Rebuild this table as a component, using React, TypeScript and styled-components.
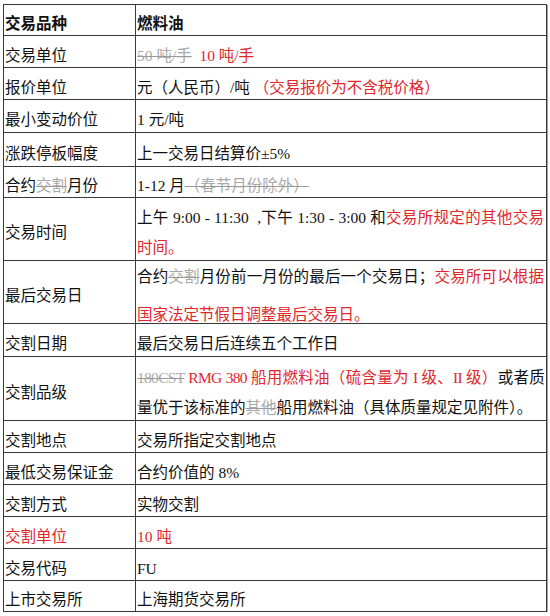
import React from "react";
import styled, { createGlobalStyle } from "styled-components";

const GlobalStyle = createGlobalStyle`
  html, body {
    margin: 0;
    padding: 0;
    background: #ffffff;
  }
  body {
    font-family: "Liberation Serif", "Noto Sans CJK SC", serif;
    color: #111111;
  }
`;

const Page = styled.div`
  padding: 4px 0 0 3px;
`;

const Table = styled.table`
  width: 544px;
  border-collapse: collapse;
  table-layout: fixed;
  font-size: 15.5px;
  box-shadow: 1px 1px 0 #a0a0a0;
`;

const Row = styled.tr<{ $h: number }>`
  height: ${({ $h }) => $h}px;
`;

const Cell = styled.td<{ $bold?: boolean; $red?: boolean }>`
  border: 1px solid #3a3a3a;
  padding: 8px 2px 0 1px;
  vertical-align: middle;
  line-height: 16px;
  font-weight: ${({ $bold }) => ($bold ? 700 : 400)};
  color: ${({ $red }) => ($red ? "#e1262d" : "#111111")};
`;

const Line = styled.div<{ $fill?: boolean; $gap?: number; $tight?: boolean }>`
  line-height: 16px;
  text-align: ${({ $fill }) => ($fill ? "justify" : "left")};
  text-align-last: ${({ $fill }) => ($fill ? "justify" : "auto")};
  letter-spacing: ${({ $tight }) => ($tight ? "-0.7px" : "normal")};
  margin-top: ${({ $gap }) => $gap ?? 0}px;
`;

const Red = styled.span`
  color: #e1262d;
`;

const Struck = styled.span`
  color: #a9a9a9;
  text-decoration: line-through;
  text-decoration-color: #9a9a9a;
`;

const App: React.FC = () => {
  return (
    <>
      <GlobalStyle />
      <Page>
        <Table>
          <colgroup>
            <col style={{ width: 132 }} />
            <col />
          </colgroup>
          <tbody>
            <Row $h={31}>
              <Cell $bold>交易品种</Cell>
              <Cell $bold>燃料油</Cell>
            </Row>
            <Row $h={32}>
              <Cell>交易单位</Cell>
              <Cell>
                <Struck>50 吨/手</Struck>&nbsp; <Red>10 吨/手</Red>
              </Cell>
            </Row>
            <Row $h={32}>
              <Cell>报价单位</Cell>
              <Cell>
                元（人民币）/吨 <Red>（交易报价为不含税价格）</Red>
              </Cell>
            </Row>
            <Row $h={33}>
              <Cell>最小变动价位</Cell>
              <Cell>1 元/吨</Cell>
            </Row>
            <Row $h={34}>
              <Cell>涨跌停板幅度</Cell>
              <Cell>上一交易日结算价±5%</Cell>
            </Row>
            <Row $h={31}>
              <Cell>
                合约<Struck>交割</Struck>月份
              </Cell>
              <Cell>
                1-12 月<Struck>（春节月份除外）</Struck>
              </Cell>
            </Row>
            <Row $h={63}>
              <Cell>交易时间</Cell>
              <Cell>
                <Line $fill>
                  上午 9:00 - 11:30 &nbsp;,下午 1:30 - 3:00 和<Red>交易所规定的其他交易</Red>
                </Line>
                <Line $gap={14}>
                  <Red>时间。</Red>
                </Line>
              </Cell>
            </Row>
            <Row $h={63}>
              <Cell>最后交易日</Cell>
              <Cell>
                <Line $fill>
                  合约<Struck>交割</Struck>月份前一月份的最后一个交易日；<Red>交易所可以根据</Red>
                </Line>
                <Line $gap={22}>
                  <Red>国家法定节假日调整最后交易日。</Red>
                </Line>
              </Cell>
            </Row>
            <Row $h={33}>
              <Cell>交割日期</Cell>
              <Cell>最后交易日后连续五个工作日</Cell>
            </Row>
            <Row $h={64}>
              <Cell>交割品级</Cell>
              <Cell>
                <Line $fill $tight>
                  <Struck>180CST</Struck> <Red>RMG 380 船用燃料油（硫含量为 I 级、II 级）</Red>或者质
                </Line>
                <Line $gap={14}>
                  量优于该标准的<Struck>其他</Struck>船用燃料油（具体质量规定见附件）。
                </Line>
              </Cell>
            </Row>
            <Row $h={32}>
              <Cell>交割地点</Cell>
              <Cell>交易所指定交割地点</Cell>
            </Row>
            <Row $h={32}>
              <Cell>最低交易保证金</Cell>
              <Cell>合约价值的 8%</Cell>
            </Row>
            <Row $h={32}>
              <Cell>交割方式</Cell>
              <Cell>实物交割</Cell>
            </Row>
            <Row $h={32}>
              <Cell $red>交割单位</Cell>
              <Cell $red>10 吨</Cell>
            </Row>
            <Row $h={32}>
              <Cell>交易代码</Cell>
              <Cell>FU</Cell>
            </Row>
            <Row $h={31}>
              <Cell>上市交易所</Cell>
              <Cell>上海期货交易所</Cell>
            </Row>
          </tbody>
        </Table>
      </Page>
    </>
  );
};

export default App;
